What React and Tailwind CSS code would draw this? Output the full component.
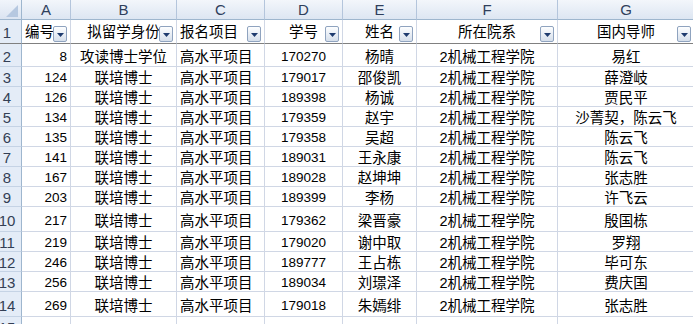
import React from 'react';

const letters = ['A', 'B', 'C', 'D', 'E', 'F', 'G'];

const headers = ['编号', '拟留学身份', '报名项目', '学号', '姓名', '所在院系', '国内导师'];
const headAlign = ['justify-start pl-[3px]', 'justify-center', 'justify-start pl-[3px]', 'justify-center', 'justify-center', 'justify-center', 'justify-center'];

const cellAlign = ['justify-end pr-[3px] text-[13.5px]', 'justify-center', 'justify-start pl-[3px]', 'justify-center text-[13.5px]', 'justify-center', 'justify-center', 'justify-center'];

const rows = [
  ['8', '攻读博士学位', '高水平项目', '170270', '杨晴', '2机械工程学院', '易红'],
  ['124', '联培博士', '高水平项目', '179017', '邵俊凯', '2机械工程学院', '薛澄岐'],
  ['126', '联培博士', '高水平项目', '189398', '杨诚', '2机械工程学院', '贾民平'],
  ['134', '联培博士', '高水平项目', '179359', '赵宇', '2机械工程学院', '沙菁契，陈云飞'],
  ['135', '联培博士', '高水平项目', '179358', '吴超', '2机械工程学院', '陈云飞'],
  ['141', '联培博士', '高水平项目', '189031', '王永康', '2机械工程学院', '陈云飞'],
  ['167', '联培博士', '高水平项目', '189028', '赵坤坤', '2机械工程学院', '张志胜'],
  ['203', '联培博士', '高水平项目', '189399', '李杨', '2机械工程学院', '许飞云'],
  ['217', '联培博士', '高水平项目', '179362', '梁晋豪', '2机械工程学院', '殷国栋'],
  ['219', '联培博士', '高水平项目', '179020', '谢中取', '2机械工程学院', '罗翔'],
  ['246', '联培博士', '高水平项目', '189777', '王占栋', '2机械工程学院', '毕可东'],
  ['256', '联培博士', '高水平项目', '189034', '刘璟泽', '2机械工程学院', '费庆国'],
  ['269', '联培博士', '高水平项目', '179018', '朱嫣绯', '2机械工程学院', '张志胜'],
  ['', '', '', '', '', '', ''],
];

function FilterButton() {
  return (
    <div className="absolute right-[3px] bottom-[1px] w-[14px] h-[16px] border border-[#8fa3bf] rounded-[2px] bg-linear-to-b from-[#fdfeff] to-[#d6dfeb] flex items-end justify-center pb-[4px]">
      <svg width="7" height="4" viewBox="0 0 7 4">
        <polygon points="0,0 7,0 3.5,4" fill="#1e3b6e" />
      </svg>
    </div>
  );
}

function RowNum({ n, first }) {
  return (
    <div
      className={`flex items-center justify-center pr-[7px] pt-[3px] bg-[#e4ecf7] border-r border-r-[#9eb6ce] border-b ${
        first ? 'border-b-[#808080]' : 'border-b-[#c5d3e5]'
      } text-[15px] text-[#333f55]`}
    >
      {n}
    </div>
  );
}

export default function App() {
  return (
    <div className="w-[693px] h-[324px] overflow-hidden bg-white font-['Liberation_Sans','Noto_Sans_CJK_SC',sans-serif] text-[14.5px] text-black leading-[16px]">
      <div className="grid grid-cols-[22px_49px_106px_88px_78px_74px_141px_137px] grid-rows-[20px_24px_23px_20px_20px_20px_20px_20px_20px_20px_25px_20px_20px_20px_25px_20px] w-[715px]">
        {/* corner */}
        <div className="relative bg-linear-to-b from-[#f1f5fb] to-[#dbe4f1] border-r border-b border-[#9eb6ce]">
          <svg className="absolute left-0 top-0" width="22" height="20" viewBox="0 0 22 20">
            <polygon points="18,5 18,17 6,17" fill="#b6c8e0" />
          </svg>
        </div>
        {letters.map((l) => (
          <div
            key={l}
            className="flex items-center justify-center bg-linear-to-b from-[#f3f6fb] to-[#dde6f2] border-r border-r-[#b4c5dc] border-b border-b-[#9eb6ce] text-[15px] text-[#2f3f5c]"
          >
            {l}
          </div>
        ))}

        {/* row 1: headers with filters */}
        <RowNum n={1} first />
        {headers.map((h, i) => (
          <div
            key={h}
            className={`relative flex items-center ${headAlign[i]} whitespace-nowrap border-r border-r-[#d0d7e5] border-b border-b-[#808080]`}
          >
            <span>{h}</span>
            <FilterButton />
          </div>
        ))}

        {rows.map((r, ri) => (
          <React.Fragment key={ri}>
            <RowNum n={ri + 2} />
            {r.map((v, ci) => (
              <div
                key={ci}
                className={`flex items-center pt-[3px] ${cellAlign[ci]} whitespace-nowrap border-r border-b border-[#d0d7e5]`}
              >
                {v}
              </div>
            ))}
          </React.Fragment>
        ))}
      </div>
    </div>
  );
}
